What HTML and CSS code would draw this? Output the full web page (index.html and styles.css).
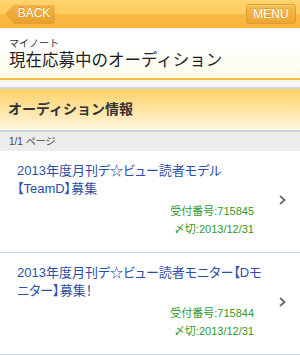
FILE: index.html
```html
<!DOCTYPE html>
<html lang="ja">
<head>
    <meta charset="UTF-8">
    <title>現在応募中のオーディション</title>
    <link rel="stylesheet" href="styles.css">
</head>
<body>
    <section id="wrap">
        <header id="head">
            <a class="btn back" href="javascript:;">BACK</a>
            <a class="btn menu" href="javascript:;">MENU</a>
        </header>
        <div id="title">
            <p class="sub">マイノート</p>
            <h1>現在応募中のオーディション</h1>
        </div>
        <section id="content">
            <h2 class="secTitle">オーディション情報</h2>
            <p class="page">1/1 ページ</p>
            <ul class="list">
                <li>
                    <a href="javascript:;">
                        <div class="info">
                            <p class="name">2013年度月刊デ☆ビュー読者モデル【TeamD】募集</p>
                            <p class="meta">受付番号:715845<br>〆切:2013/12/31</p>
                        </div>
                        <span class="arrow">
                            <svg width="7" height="10" viewBox="0 0 7 10"><polyline points="1,1 5.5,5 1,9" fill="none" stroke="#707070" stroke-width="2"/></svg>
                        </span>
                    </a>
                </li>
                <li>
                    <a href="javascript:;">
                        <div class="info">
                            <p class="name">2013年度月刊デ☆ビュー読者モニター【Dモニター】募集！</p>
                            <p class="meta">受付番号:715844<br>〆切:2013/12/31</p>
                        </div>
                        <span class="arrow">
                            <svg width="7" height="10" viewBox="0 0 7 10"><polyline points="1,1 5.5,5 1,9" fill="none" stroke="#707070" stroke-width="2"/></svg>
                        </span>
                    </a>
                </li>
            </ul>
        </section>
    </section>
</body>
</html>
```

FILE: styles.css
```css
/*reset*/
html,body{height: 100%;}
html,body,h1,h2,p,ul,li{margin: 0;padding: 0;}
body{font-family: "Liberation Sans","Noto Sans CJK JP",sans-serif;color: #222;background: #fff;}
a{text-decoration: none;}
li{list-style: none;}

#wrap{
    background: #f5f5f5;
    min-height: 100%;
}

/*top bar*/
#head{
    height: 28px;
    padding: 0 4px 0 5px;
    display: flex;
    align-items: center;
    justify-content: space-between;
    background: linear-gradient(#ffd46e 0, #ffcc5e 50%, #fbb945 50%, #f9b43c 100%);
}
#head .btn{
    display: block;
    box-sizing: border-box;
    width: 50px;
    height: 20px;
    line-height: 19px;
    font-size: 12px;
    color: #fff;
    text-align: center;
    text-shadow: 0 -1px 0 rgba(150,90,0,.35);
    background: linear-gradient(#f8bd4c, #eca534);
    border: 1px solid #e09a32;
    border-radius: 3px;
    box-shadow: inset 0 1px 0 rgba(255,230,170,.5);
}
#head .back{
    padding-left: 8px;
    border: none;
    border-radius: 0 3px 3px 0;
    background: linear-gradient(#f4b545, #e89e2e);
    clip-path: polygon(9px 0, 100% 0, 100% 100%, 9px 100%, 0 50%);
}

/*page title*/
#title{
    height: 52px;
    padding: 10px 9px 0;
    box-sizing: border-box;
    background: linear-gradient(#fff 0, #fff 40%, #fafae8 100%);
    border-bottom: 2px solid #fcbc45;
}
#title .sub{
    font-size: 10px;
    line-height: 12px;
    color: #333;
}
#title h1{
    font-size: 16.5px;
    line-height: 20px;
    font-weight: normal;
    color: #1e1e1e;
}

#content{
    margin-top: 7px;
}
#content .secTitle{
    height: 41px;
    line-height: 41px;
    padding-left: 8px;
    font-size: 14px;
    color: #333;
    border-top: 2px solid #cfd8e3;
    background: linear-gradient(#ffd065 0, #ffe6a8 55%, #fff7e2 100%);
}
#content .page{
    height: 19px;
    line-height: 19px;
    padding-left: 9px;
    font-size: 10px;
    color: #444;
    border-top: 2px solid #c9d3df;
    background: #ececec;
}

#content .list{
    background: #fff;
}
#content .list li{
    border-bottom: 1px solid #c6d6ec;
}
#content .list li a{
    display: flex;
    align-items: center;
    padding: 11px 0 14px 17px;
}
#content .list .info{
    flex: 1;
}
#content .list .name{
    font-size: 13px;
    line-height: 18px;
    color: #2d4ea8;
    font-feature-settings: "palt";
}
#content .list .meta{
    margin-top: 4px;
    padding-right: 18px;
    font-size: 11px;
    line-height: 18px;
    color: #36992a;
    text-align: right;
}
#content .list .arrow{
    width: 28px;
    padding-left: 7px;
    box-sizing: border-box;
}
#content .list .arrow svg{
    display: block;
}
```
